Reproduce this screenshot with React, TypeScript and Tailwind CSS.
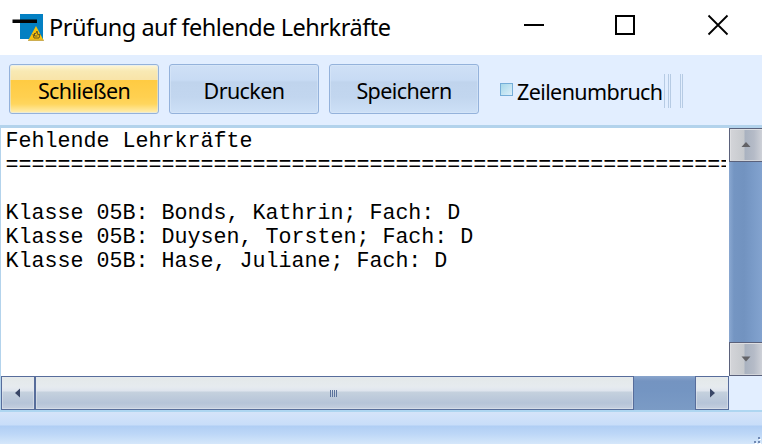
import React from 'react';

const UI_FONT = "font-['Noto_Sans','Open_Sans',sans-serif]";

function AppIcon() {
  return (
    <svg width="33" height="30" viewBox="0 0 33 30" className="mt-[13px] ml-3 shrink-0">
      <rect x="8" y="1" width="23" height="25" fill="#0380c3" />
      <rect x="0.5" y="6.5" width="24.5" height="3.5" fill="#050505" />
      <path d="M24 13 L31.8 27.8 H16 Z" fill="#fac30c" />
      <path d="M16 27.2 H32" stroke="#b99d55" strokeWidth="1" />
      <path d="M21 21 l1 4 h5 l1 -4 l-2 1 l-1 -4 l-1.5 3 l-1 -1 v3 h3" fill="none" stroke="#665621" strokeWidth="1" />
    </svg>
  );
}

function ToolButton({ label, primary = false }: { label: string; primary?: boolean }) {
  const skin = primary
    ? 'bg-[linear-gradient(#fff7d9_0,#f8e9b4_6px,#f8e4a8_15px,#ffcb42_15px,#ffd050_32px,#ffd65e_39px,#ffefb4_100%)]'
    : 'bg-[linear-gradient(#cfe0f6_0,#c8dbf4_15px,#c0d4ed_17px,#c2d6ef_32px,#cde0f7_100%)]';
  return (
    <button
      className={`h-[50px] w-[150px] shrink-0 rounded-[3px] border border-[#94b2db] pt-px text-[21.5px] leading-[49px] tracking-[-0.6px] text-black shadow-[inset_0_0_0_1px_#dce9fa80] ${skin}`}
    >
      {label}
    </button>
  );
}

function Arrow({ d, fill }: { d: string; fill: string }) {
  return (
    <svg width="10" height="10" viewBox="0 0 10 10">
      <path d={d} fill={fill} />
    </svg>
  );
}

const vButton =
  'flex h-[34px] w-[33px] shrink-0 items-center justify-center border border-r-0 border-[#5a617b] bg-[linear-gradient(90deg,#d4d5d9_0,#c6c9cd_14px,#a9b2c0_15px,#b5bbc7_24px,#ced1d8_100%)] shadow-[inset_1px_1px_0_#dedfe2,inset_0_-1px_0_#d2d4d9]';
const hSkin =
  'border border-[#576d9b] bg-[linear-gradient(#e4e9e9_0,#e6ebef_10px,#dee4ed_14px,#c5d1de_15px,#b6c4d8_26px,#c5cfdf_100%)] shadow-[inset_0_0_0_1px_#e5eaf080]';

export default function App() {
  return (
    <main className={`flex h-[444px] w-[762px] flex-col overflow-hidden bg-white text-black ${UI_FONT}`}>
      <header className="flex h-[55px] shrink-0">
        <AppIcon />
        <h1 className="ml-1 w-[360px] whitespace-nowrap text-[23.5px] leading-[54px] tracking-[-0.47px]">
          Prüfung auf fehlende Lehrkräfte
        </h1>
        <div className="ml-auto flex">
          <svg width="238" height="55" viewBox="524 0 238 55" fill="none" stroke="#000">
            <path d="M524 25 H544" strokeWidth="2" />
            <rect x="616" y="16" width="18" height="18" strokeWidth="2" />
            <path d="M708.5 15.5 L727.5 34.5 M727.5 15.5 L708.5 34.5" strokeWidth="1.8" />
          </svg>
        </div>
      </header>

      <nav className="flex h-[70px] shrink-0 items-start gap-2.5 bg-[#e2eeff] pt-[9px] pl-[9px]">
        <ToolButton label="Schließen" primary />
        <ToolButton label="Drucken" />
        <ToolButton label="Speichern" />
        <label className="ml-[11px] flex h-[54px] items-center">
          <span className="mb-1 h-[13px] w-[13px] border border-[#75add8] bg-linear-to-br from-[#a5d7e9] to-[#dceffa]" />
          <span className="ml-1 w-[147px] whitespace-nowrap pt-[2px] text-[21.5px] leading-[52px] tracking-[-0.6px]">Zeilenumbruch</span>
        </label>
        <div className="-ml-[10px] mt-2.5 flex h-[34px]">
          <span className="w-px bg-[#b6cbe4]" />
          <span className="ml-[3px] w-[3px] border-x border-[#b6cbe4]" />
          <span className="ml-[9px] w-[3px] border-x border-[#b6cbe4]" />
        </div>
      </nav>

      <div className="h-[3px] shrink-0 bg-[#b3d3ec]" />

      <section className="flex h-[248px] shrink-0 border-l border-[#b3d3ec]">
        <pre className="w-[725px] shrink-0 overflow-hidden pt-[2px] pl-[4.5px] font-['Liberation_Mono',monospace] text-[21.66px] leading-6">
{`Fehlende Lehrkräfte
========================================================

Klasse 05B: Bonds, Kathrin; Fach: D
Klasse 05B: Duysen, Torsten; Fach: D
Klasse 05B: Hase, Juliane; Fach: D`}
        </pre>
        <div className="ml-[3px] flex w-[33px] shrink-0 flex-col bg-[linear-gradient(90deg,#8aa8d1_0,#7495c2_5px,#7293c0_15px,#7a9bc8_24px,#83a3cf_100%)]">
          <div className={vButton}><Arrow d="M0.5 7 L5 2 L9.5 7 Z" fill="#626266" /></div>
          <div className="flex-1" />
          <div className={vButton}><Arrow d="M0.5 2.5 L5 7.5 L9.5 2.5 Z" fill="#626266" /></div>
        </div>
      </section>

      <section className="flex h-[34px] shrink-0 border-l border-[#b3d3ec] bg-[#e2eeff]">
        <div className="flex w-[728px] bg-[linear-gradient(#8aa5cc_0,#7494c1_5px,#7495c2_15px,#7b9bc5_100%)]">
          <div className={`flex w-[34px] items-center justify-center ${hSkin}`}><Arrow d="M7 0.5 L2 5 L7 9.5 Z" fill="#394666" /></div>
          <div className={`flex w-[599px] items-center justify-center gap-px pr-[2px] ${hSkin}`}>
            <span className="h-[7px] w-px bg-[#5c739d]" />
            <span className="h-[7px] w-px bg-[#5c739d]" />
            <span className="h-[7px] w-px bg-[#5c739d]" />
            <span className="h-[7px] w-px bg-[#5c739d]" />
          </div>
          <div className="flex-1" />
          <div className={`flex w-[34px] items-center justify-center ${hSkin}`}><Arrow d="M3 0.5 L8 5 L3 9.5 Z" fill="#394666" /></div>
        </div>
      </section>

      <footer className="flex h-[34px] shrink-0 items-end justify-end border-t-2 border-[#aed6f1] bg-[linear-gradient(#d5e4f9_0,#c8ddf9_13px,#b0cef4_14px,#bdd7f7_22px,#d5e7fa_100%)]">
        <svg width="10" height="8" viewBox="0 0 10 8" fill="#7089b3">
          <path d="M2 5h2v2H2zM6 5h2v2H6zM6 1h2v2H6z" />
          <path d="M4 7h1v1H3V7zM8 7h1v1H7V7zM8 3h1v1H7V3z" fill="#fff" />
        </svg>
      </footer>
    </main>
  );
}
